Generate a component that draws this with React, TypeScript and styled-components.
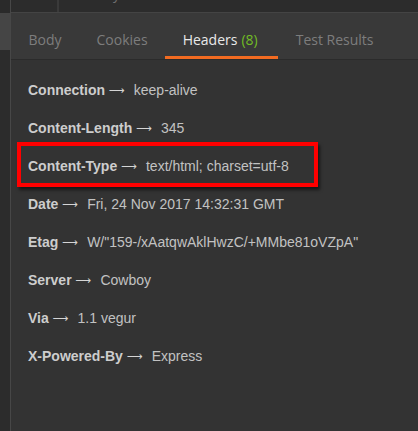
import React from "react";
import styled, { createGlobalStyle } from "styled-components";

const Global = createGlobalStyle`
  html, body { margin: 0; padding: 0; background: #333333; }
  body { width: 418px; height: 431px; overflow: hidden; }
  #root { height: 431px; }
`;

const Shell = styled.div`
  display: flex;
  height: 431px;
  background: #333333;
`;

const Rail = styled.div`
  width: 10px;
  flex: none;
  display: flex;
  flex-direction: column;
  background: #2c2c2c;
  border-right: 1px solid #474747;
`;

const RailTop = styled.div`
  height: 13px;
  background: #2a2a2a;
`;

const RailActive = styled.div`
  height: 37px;
  background: #454545;
`;

const Main = styled.div`
  flex: 1;
  display: flex;
  flex-direction: column;
  min-width: 0;
`;

const TopStrip = styled.div`
  height: 12px;
  display: flex;
  background: #2c2c2c;
  border-bottom: 1px solid #444444;
  overflow: hidden;
`;

const TopCell = styled.div<{ $w?: number }>`
  width: ${(p) => (p.$w ? `${p.$w}px` : "auto")};
  flex: ${(p) => (p.$w ? "none" : "1")};
  border-right: ${(p) => (p.$w ? "2px solid #3a3a3a" : "none")};
  display: flex;
  align-items: flex-end;
  overflow: hidden;
`;

const TopText = styled.span`
  font-family: "Open Sans", sans-serif;
  font-size: 14px;
  line-height: 14px;
  color: #6f6f6f;
  margin-left: 28px;
  margin-bottom: 11px;
`;

const TabBar = styled.div`
  height: 46px;
  display: flex;
  align-items: stretch;
  background: #393939;
  border-bottom: 1px solid #2b2b2b;
`;

const Tab = styled.div<{ $active?: boolean }>`
  display: flex;
  align-items: center;
  padding: 10px 17.5px 0;
  font-family: "Open Sans", sans-serif;
  font-size: 14px;
  color: ${(p) => (p.$active ? "#e9e9e9" : "#7d7d7d")};
  border-bottom: 3px solid ${(p) => (p.$active ? "#f26b21" : "transparent")};
  white-space: nowrap;
`;

const Count = styled.span`
  color: #72bd25;
  margin-left: 4px;
  margin-right: 3px;
`;

const List = styled.div`
  display: flex;
  flex-direction: column;
  padding-top: 11px;
`;

const Row = styled.div<{ $hl?: boolean }>`
  box-sizing: border-box;
  height: ${(p) => (p.$hl ? "45px" : "38px")};
  display: flex;
  align-items: center;
  font-family: "Liberation Sans", Arial, sans-serif;
  font-size: 14px;
  ${(p) =>
    p.$hl
      ? `
    width: 301px;
    margin: -5px 0 -2px 6px;
    padding: 3px 0 0 7px;
    border: 4px solid #ff0000;
    box-shadow: 2px 3px 3px rgba(0,0,0,0.55);
    position: relative;
  `
      : `padding-left: 17px;`}
`;

const Key = styled.span`
  font-weight: bold;
  color: #cdcdcd;
  white-space: nowrap;
`;

const Arrow = styled.span`
  font-family: "DejaVu Sans", sans-serif;
  font-size: 11px;
  color: #d5d5d5;
  margin-left: 4px;
  margin-right: 9px;
`;

const Value = styled.span`
  color: #c2c2c2;
  white-space: nowrap;
`;

const headers: [string, string][] = [
  ["Connection", "keep-alive"],
  ["Content-Length", "345"],
  ["Content-Type", "text/html; charset=utf-8"],
  ["Date", "Fri, 24 Nov 2017 14:32:31 GMT"],
  ["Etag", 'W/"159-/xAatqwAklHwzC/+MMbe81oVZpA"'],
  ["Server", "Cowboy"],
  ["Via", "1.1 vegur"],
  ["X-Powered-By", "Express"],
];

export default function App() {
  return (
    <>
      <Global />
      <Shell>
        <Rail>
          <RailTop />
          <RailActive />
        </Rail>
        <Main>
          <TopStrip>
            <TopCell $w={46} />
            <TopCell>
              <TopText>Body</TopText>
            </TopCell>
          </TopStrip>
          <TabBar>
            <Tab>Body</Tab>
            <Tab>Cookies</Tab>
            <Tab $active>
              Headers<Count>(8)</Count>
            </Tab>
            <Tab>Test Results</Tab>
          </TabBar>
          <List>
            {headers.map(([k, v]) => (
              <Row key={k} $hl={k === "Content-Type"}>
                <Key>{k}</Key>
                <Arrow>⟶</Arrow>
                <Value>{v}</Value>
              </Row>
            ))}
          </List>
        </Main>
      </Shell>
    </>
  );
}
